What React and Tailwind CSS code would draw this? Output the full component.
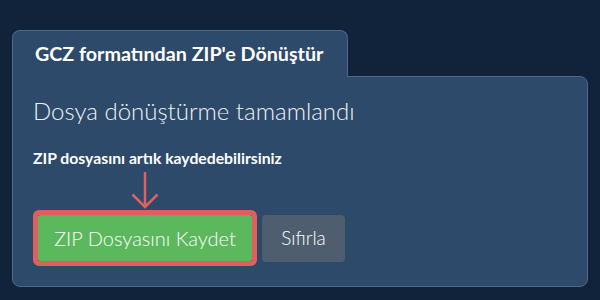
export default function App() {
  return (
    <div className="w-[600px] h-[300px] bg-[#10233a] pt-[30px] px-3 font-['Lato','Noto_Sans',sans-serif] text-white">
      <div className="flex flex-col w-[576px]">
        <div className="relative z-10 -mb-px w-[336px] h-[47px] flex items-center pl-[22px] bg-[#2d4a6a] border border-b-0 border-[#4d6887] rounded-t-lg">
          <span className="text-[19.7px] font-bold leading-none">GCZ formatından ZIP'e Dönüştür</span>
        </div>
        <div className="h-[211px] bg-[#2d4a6a] border border-[#4d6887] rounded-b-lg rounded-tr-lg pl-[20px] pt-[18px]">
          <h2 className="text-[24px] leading-[32px] font-light text-[#eef2f6]">Dosya dönüştürme tamamlandı</h2>
          <p className="mt-[21px] text-[15.75px] leading-[20px] font-bold">ZIP dosyasını artık kaydedebilirsiniz</p>
          <div className="flex items-start">
            <div className="flex flex-col items-center">
              <svg width="30" height="42" viewBox="0 0 30 42" className="block">
                <path d="M15 4 V39 M2.5 26.5 L15 39 L27.5 26.5" fill="none" stroke="#e0625f" strokeWidth="2.5" />
              </svg>
              <div className="border-[5px] border-[#de5f5c] rounded-md">
                <button className="w-[214px] h-[46px] bg-[#5cb85c] text-[20px] font-light text-white rounded-[2px]">ZIP Dosyasını Kaydet</button>
              </div>
            </div>
            <button className="ml-[5px] mt-[47px] w-[83px] h-[47px] bg-[#4e5e6f] text-[19px] font-light text-white rounded">Sıfırla</button>
          </div>
        </div>
      </div>
    </div>
  );
}
